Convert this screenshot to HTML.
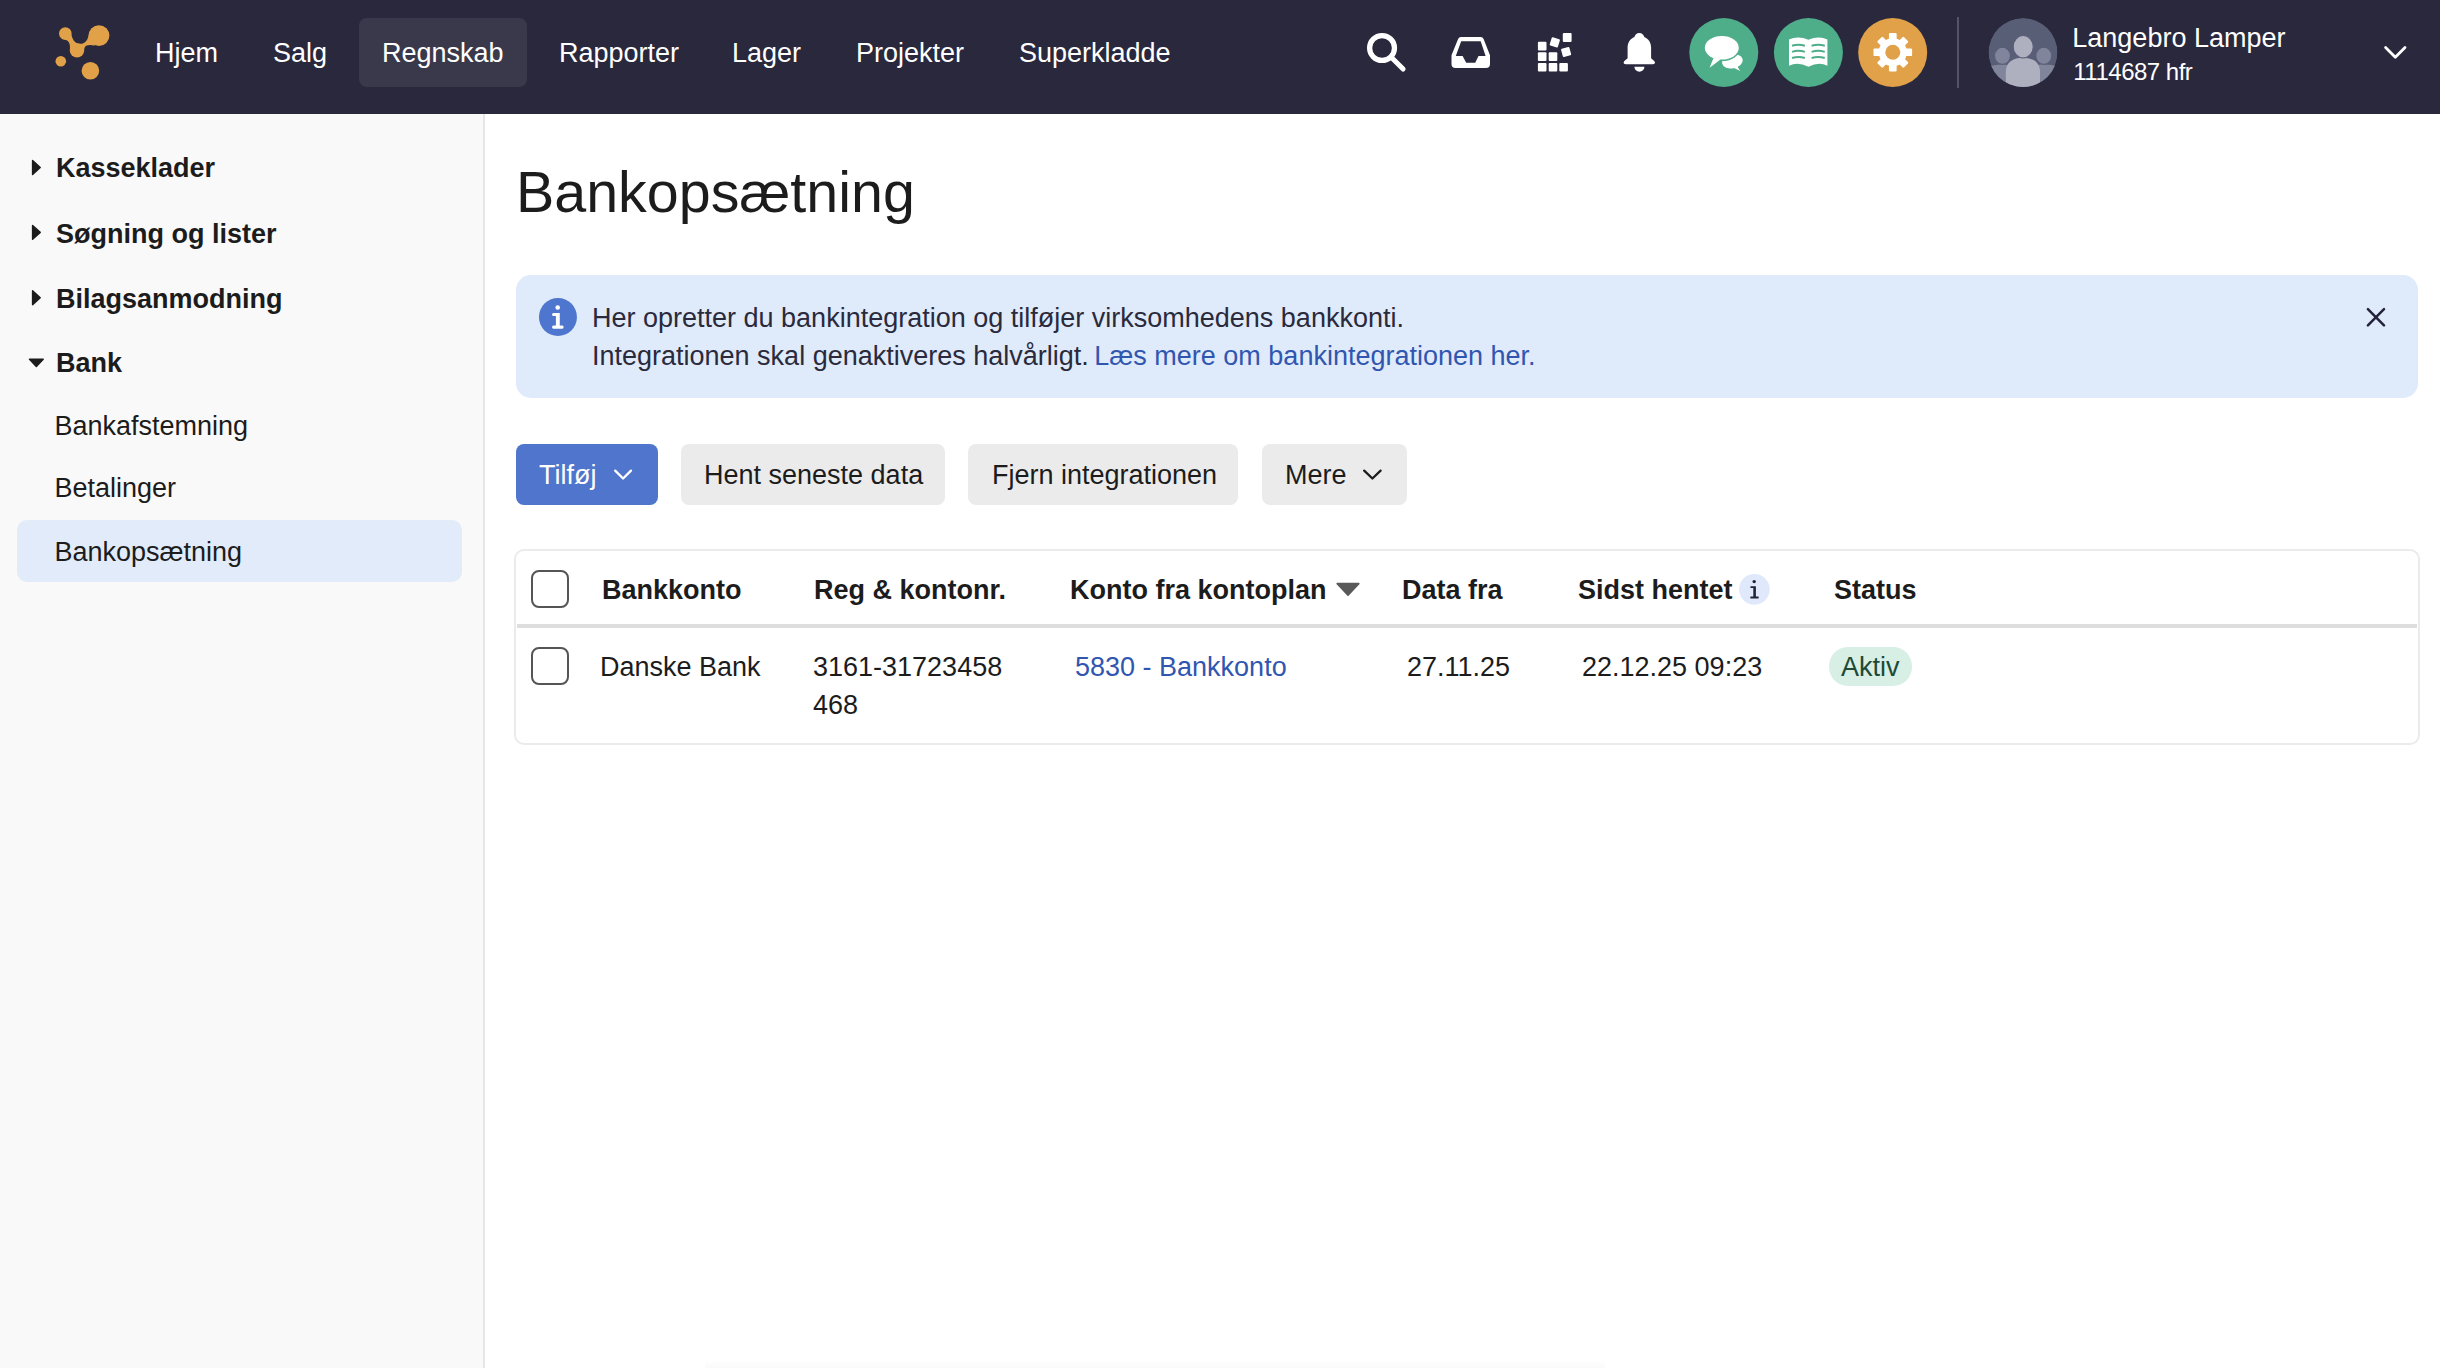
<!DOCTYPE html>
<html lang="da">
<head>
<meta charset="utf-8">
<title>Bankopsætning</title>
<style>
*{box-sizing:border-box;margin:0;padding:0}
html,body{width:2440px;height:1368px;overflow:hidden;background:#fff}
body{font-family:"Liberation Sans",sans-serif;color:#1c1c1c;position:relative}
.abs{position:absolute;white-space:nowrap}
#top{position:absolute;left:0;top:0;width:2440px;height:114px;background:#2a283d}
.nav{position:absolute;top:32.9px;font-size:27px;color:#fff;line-height:40px;white-space:nowrap}
#reg{position:absolute;left:359px;top:18px;width:168px;height:69px;background:#3a384b;border-radius:8px}
#side{position:absolute;left:0;top:114px;width:485px;height:1254px;background:#f9f9f9;border-right:2px solid #e6e6e6}
.sh{position:absolute;left:56px;font-size:27px;font-weight:bold;line-height:40px;color:#1c1c1c;white-space:nowrap}
.si{position:absolute;left:54.5px;font-size:27px;line-height:40px;color:#1c1c1c;white-space:nowrap}
#active{position:absolute;left:17px;top:520px;width:445px;height:62px;background:#e1ebfa;border-radius:10px}
#banner{position:absolute;left:516px;top:275px;width:1902px;height:122.5px;background:#dfeafb;border-radius:15px}
.btn{position:absolute;top:444px;height:61px;border-radius:8px;background:#ebebeb}
.bt{position:absolute;font-size:27px;line-height:40px;white-space:nowrap;color:#1c1c1c}
#tbl{position:absolute;left:514px;top:549px;width:1906px;height:196px;border:2px solid #ebebeb;border-radius:10px}
.cb{position:absolute;width:38.4px;height:38.4px;border:2.5px solid #555;border-radius:8px;background:#fff}
.th{position:absolute;top:570.1px;font-size:27px;font-weight:bold;line-height:40px;white-space:nowrap;color:#1c1c1c}
.td{position:absolute;top:646.5px;font-size:27px;line-height:40px;white-space:nowrap;color:#1c1c1c}
svg{position:absolute;overflow:visible}
</style>
</head>
<body>
<div id="top">
  <div id="reg"></div>
  <div class="nav" style="left:155px">Hjem</div>
  <div class="nav" style="left:273px">Salg</div>
  <div class="nav" style="left:382px">Regnskab</div>
  <div class="nav" style="left:559px">Rapporter</div>
  <div class="nav" style="left:732px">Lager</div>
  <div class="nav" style="left:856px">Projekter</div>
  <div class="nav" style="left:1019px">Superkladde</div>
  <div class="nav" style="left:2072.3px;top:17.5px">Langebro Lamper</div>
  <div class="nav" style="left:2073.3px;top:54px;font-size:24px;line-height:36px;letter-spacing:-0.5px">1114687 hfr</div>
</div>

<svg style="left:0;top:0" width="2440" height="114" viewBox="0 0 2440 114">
  <!-- logo -->
  <g fill="#e0a149">
    <circle cx="99" cy="35.6" r="10.4"/>
    <circle cx="65.3" cy="33.5" r="6.3"/>
    <circle cx="77" cy="50.4" r="7.2"/>
    <circle cx="60.8" cy="61.3" r="5.3"/>
    <circle cx="90.4" cy="70.7" r="8.8"/>
    <path d="M65.3,33.5 L71.4,34.6 C72.2,38.6 74.2,42.6 78,43.6 C81.5,44.4 85,43.2 86.8,40.2 C88,38.3 88.5,36.3 88.7,34.5 L94.7,45.7 C91.5,44.7 88.8,44.6 86.5,45.6 C85,46.4 84.4,47.8 84.2,49.6 L69.9,48.6 C70.2,45.8 69.6,42.5 67.8,41 C66.8,40.2 65.6,39.9 64.3,39.8 Z"/>
  </g>
  <!-- search -->
  <circle cx="1382.05" cy="48" r="12.43" fill="none" stroke="#fff" stroke-width="5.25"/>
  <line x1="1391.5" y1="57.5" x2="1403.1" y2="69.1" stroke="#fff" stroke-width="5" stroke-linecap="round"/>
  <!-- inbox -->
  <path fill="#fff" fill-rule="evenodd" d="M1461,36.9 L1480.7,36.9 Q1482.8,36.9 1483.6,39 L1490,55.3 L1490,64 Q1490,68 1486,68 L1455.5,68 Q1451.5,68 1451.5,64 L1451.5,55.3 L1458.1,39 Q1458.9,36.9 1461,36.9 Z M1461.2,41.2 L1480.7,41.2 L1485.6,56 L1478.5,56 L1475.2,62.7 L1466.2,62.7 L1462.6,56 L1455.8,56 Z"/>
  <!-- grid -->
  <g fill="#fff">
    <rect x="1537.9" y="63" width="8.6" height="8.6" rx="1"/>
    <rect x="1548.7" y="63" width="8.6" height="8.6" rx="1"/>
    <rect x="1559.3" y="63" width="8.6" height="8.6" rx="1"/>
    <rect x="1537.9" y="52.3" width="8.6" height="8.6" rx="1"/>
    <rect x="1548.7" y="52.3" width="8.6" height="8.6" rx="1"/>
    <rect x="1537.9" y="41.8" width="8.6" height="8.6" rx="1"/>
    <rect x="1562.8" y="33" width="8.8" height="9" rx="1"/>
    <rect x="-4.3" y="-4.3" width="8.6" height="8.6" rx="1" transform="translate(1554.8 42.4) rotate(17)"/>
    <rect x="-4.3" y="-4.3" width="8.6" height="8.6" rx="1" transform="translate(1566.1 52.05) rotate(-15)"/>
  </g>
  <!-- bell -->
  <path fill="#fff" d="M1639.3,32.9 C1636.6,32.9 1635,34.6 1634.4,36.9 C1630.2,38.6 1627.6,42.3 1627.6,47.5 L1627.6,58.2 L1624.4,61.1 Q1623.1,62.4 1623.9,63.5 Q1624.5,64.3 1625.8,64.3 L1652.8,64.3 Q1654.1,64.3 1654.7,63.5 Q1655.5,62.4 1654.2,61.1 L1651.1,58.2 L1651.1,47.5 C1651.1,42.3 1648.5,38.6 1644.3,36.9 C1643.7,34.6 1642.1,32.9 1639.3,32.9 Z M1634.4,66.8 L1644.4,66.8 A5,5 0 0 1 1634.4,66.8 Z"/>
  <!-- chat circle -->
  <circle cx="1723.8" cy="52.5" r="34.5" fill="#4fae8a"/>
  <g fill="#fff">
    <ellipse cx="1732.4" cy="61.4" rx="10.5" ry="6.9" transform="rotate(-12 1732.4 61.4)"/>
    <path d="M1737,66 L1740.3,70.9 L1733,67.5 Z"/>
  </g>
  <ellipse cx="1721.8" cy="47.8" rx="18.5" ry="13.3" fill="#4fae8a"/>
  <g fill="#fff">
    <ellipse cx="1721.8" cy="47.8" rx="17" ry="11.8"/>
    <path d="M1713.7,57.5 L1709.6,67.8 L1720.5,59.5 Z"/>
  </g>
  <!-- book circle -->
  <circle cx="1808.4" cy="52.5" r="34.5" fill="#4fae8a"/>
  <path fill="#fff" d="M1789,39.6 Q1798,35.3 1808.4,39.8 Q1818.8,35.3 1827.4,39.6 L1827.4,65.7 Q1818.8,61.3 1808.4,66.8 Q1798,61.3 1789,65.7 Z"/>
  <g fill="none" stroke="#4fae8a" stroke-width="2" transform="translate(0 0.8)">
    <path d="M1792,45 Q1798.5,42.8 1804.9,45"/>
    <path d="M1792,51.1 Q1798.5,48.9 1804.9,51.1"/>
    <path d="M1792,57.2 Q1798.5,55 1804.9,57.2"/>
    <path d="M1811.6,45 Q1818.2,42.8 1824.8,45"/>
    <path d="M1811.6,51.1 Q1818.2,48.9 1824.8,51.1"/>
    <path d="M1811.6,57.2 Q1818.2,55 1824.8,57.2"/>
  </g>
  <!-- gear circle -->
  <circle cx="1892.7" cy="52.5" r="34.5" fill="#e0a149"/>
  <g transform="translate(1892.8 52.25)" fill="#fff">
    <circle r="14"/>
    <rect x="-3.85" y="-19.3" width="7.7" height="38.6" rx="1.2"/>
    <rect x="-3.85" y="-18.7" width="7.7" height="37.4" rx="1.2" transform="rotate(45)"/>
    <rect x="-3.85" y="-19.3" width="7.7" height="38.6" rx="1.2" transform="rotate(90)"/>
    <rect x="-3.85" y="-18.7" width="7.7" height="37.4" rx="1.2" transform="rotate(135)"/>
    <circle r="7.5" fill="#e0a149"/>
  </g>
  <!-- divider -->
  <rect x="1957" y="17" width="2" height="71" fill="#55536a"/>
  <!-- avatar -->
  <defs><clipPath id="av"><circle cx="2023" cy="52.5" r="34.5"/></clipPath></defs>
  <g clip-path="url(#av)">
    <circle cx="2023" cy="52.5" r="34.5" fill="#595e77"/>
    <g fill="#81859b">
      <path d="M1981,100 L1981,75 C1983,68 1991,64.6 2002.4,64.6 C2014,64.6 2022,68 2024,75 L2024,100 Z"/>
      <path d="M2022.5,100 L2022.5,75 C2024.5,68 2032.5,64.6 2043.8,64.6 C2055.4,64.6 2063.4,68 2065.4,75 L2065.4,100 Z"/>
      <ellipse cx="2002.45" cy="55.85" rx="8" ry="8.55" stroke="#595e77" stroke-width="1.1"/>
      <ellipse cx="2043.8" cy="55.85" rx="8" ry="8.55" stroke="#595e77" stroke-width="1.1"/>
    </g>
    <g fill="#aeb0bf">
      <path d="M2005.8,100 L2005.8,72 C2005.8,62 2013,57.7 2022.9,57.7 C2032.8,57.7 2040,62 2040,72 L2040,100 Z"/>
      <ellipse cx="2023.2" cy="46.75" rx="10.05" ry="11.25" stroke="#595e77" stroke-width="1.1"/>
    </g>
  </g>
  <!-- chevron -->
  <polyline points="2385.6,47.6 2395.3,57.3 2405,47.6" fill="none" stroke="#fff" stroke-width="2.8" stroke-linecap="round" stroke-linejoin="round"/>
</svg>

<div id="side"></div>
<div id="active"></div>
<svg style="left:0;top:0" width="484" height="400" viewBox="0 0 484 400">
  <g fill="#1c1c1c" stroke="#1c1c1c" stroke-width="1.5" stroke-linejoin="round">
  <polygon points="32.6,160.6 40.2,167.5 32.6,174.4"/>
  <polygon points="32.6,225.5 40.2,232.4 32.6,239.3"/>
  <polygon points="32.6,290.8 40.2,297.7 32.6,304.6"/>
  <polygon points="29.5,359.2 43.2,359.2 36.35,366.4"/>
  </g>
</svg>
<div class="sh" style="top:148px">Kasseklader</div>
<div class="sh" style="top:213.7px">Søgning og lister</div>
<div class="sh" style="top:278.8px">Bilagsanmodning</div>
<div class="sh" style="top:343.4px">Bank</div>
<div class="si" style="top:405.5px">Bankafstemning</div>
<div class="si" style="top:468.4px">Betalinger</div>
<div class="si" style="top:532px">Bankopsætning</div>

<div class="abs" style="left:516px;top:152.3px;font-size:57.4px;line-height:80px">Bankopsætning</div>

<div id="banner"></div>
<svg style="left:0;top:0" width="2440" height="400" viewBox="0 0 2440 400">
  <circle cx="557.95" cy="316.94" r="19" fill="#4f76cf"/>
  <g fill="#fff">
    <circle cx="557.7" cy="307.5" r="2.3"/>
    <path d="M553.4,312.9 L559.75,312.9 L559.75,325.4 L562.3,325.4 Q563.6,325.4 563.6,327.1 Q563.6,328.8 562.3,328.8 L553.4,328.8 Q552.1,328.8 552.1,327.1 Q552.1,325.4 553.4,325.4 L555.9,325.4 L555.9,316.1 L553.4,316.1 Q552.1,316.1 552.1,314.5 Q552.1,312.9 553.4,312.9 Z"/>
  </g>
  <g stroke="#23223a" stroke-width="2.5" stroke-linecap="round">
    <line x1="2367.9" y1="309.2" x2="2384" y2="325.3"/>
    <line x1="2384" y1="309.2" x2="2367.9" y2="325.3"/>
  </g>
</svg>
<div class="bt" style="left:592px;top:297.6px;color:#2a2a3c">Her opretter du bankintegration og tilføjer virksomhedens bankkonti.</div>
<div class="bt" style="left:592px;top:336.4px;color:#2a2a3c">Integrationen skal genaktiveres halvårligt. <span style="color:#3156b0;margin-left:-2px">Læs mere om bankintegrationen her.</span></div>

<div class="btn" style="left:516px;width:142px;background:#4f75cc"></div>
<div class="bt" style="left:539px;top:454.8px;color:#fff">Tilføj</div>
<div class="btn" style="left:681px;width:264px"></div>
<div class="bt" style="left:704px;top:454.8px">Hent seneste data</div>
<div class="btn" style="left:968px;width:270px"></div>
<div class="bt" style="left:992px;top:454.8px">Fjern integrationen</div>
<div class="btn" style="left:1262px;width:145px"></div>
<div class="bt" style="left:1285px;top:454.8px">Mere</div>
<svg style="left:0;top:0" width="2440" height="520" viewBox="0 0 2440 520">
  <polyline points="615.2,470.6 623.1,478.5 631,470.6" fill="none" stroke="#fff" stroke-width="2.3" stroke-linecap="round" stroke-linejoin="round"/>
  <polyline points="1364.2,470.6 1372.4,478.5 1380.6,470.6" fill="none" stroke="#1c1c1c" stroke-width="2.3" stroke-linecap="round" stroke-linejoin="round"/>
</svg>

<div id="tbl"></div>
<div class="abs" style="left:517px;top:624px;width:1900px;height:4px;background:#dedede"></div>
<div class="cb" style="left:531px;top:569.8px"></div>
<div class="cb" style="left:531px;top:647px"></div>
<div class="th" style="left:602px">Bankkonto</div>
<div class="th" style="left:814px">Reg &amp; kontonr.</div>
<div class="th" style="left:1070px">Konto fra kontoplan</div>
<div class="th" style="left:1402px">Data fra</div>
<div class="th" style="left:1578px">Sidst hentet</div>
<div class="th" style="left:1834px">Status</div>
<svg style="left:0;top:0" width="2440" height="620" viewBox="0 0 2440 620">
  <polygon points="1337.2,583.6 1358.8,583.6 1348,595.2" fill="#595959" stroke="#595959" stroke-width="1.6" stroke-linejoin="round"/>
  <circle cx="1754.4" cy="589.3" r="15.35" fill="#dfe9fb"/>
  <g fill="#23223a">
    <circle cx="1754.2" cy="581.6" r="1.7"/>
    <path d="M1751.2,586.2 L1755.9,586.2 L1755.9,596.4 L1758,596.4 Q1758.8,596.4 1758.8,597.4 Q1758.8,598.4 1758,598.4 L1751,598.4 Q1750.2,598.4 1750.2,597.4 Q1750.2,596.4 1751,596.4 L1753.3,596.4 L1753.3,588 L1751.2,588 Q1750.2,588 1750.2,587.1 Q1750.2,586.2 1751.2,586.2 Z"/>
  </g>
</svg>

<div class="td" style="left:600px">Danske Bank</div>
<div class="td" style="left:813px">3161-31723458</div>
<div class="td" style="left:813px;top:684.6px">468</div>
<div class="td" style="left:1075px;color:#3156b0">5830 - Bankkonto</div>
<div class="td" style="left:1407px">27.11.25</div>
<div class="td" style="left:1582px">22.12.25 09:23</div>
<div class="abs" style="left:1829px;top:647px;width:83px;height:38.5px;border-radius:19px;background:#d8efe6"></div>
<div class="td" style="left:1841px;color:#1e4a36">Aktiv</div>

<div class="abs" style="left:705px;top:1360px;width:900px;height:8px;background:linear-gradient(rgba(0,0,0,0),rgba(0,0,0,0.018))"></div>
</body>
</html>
